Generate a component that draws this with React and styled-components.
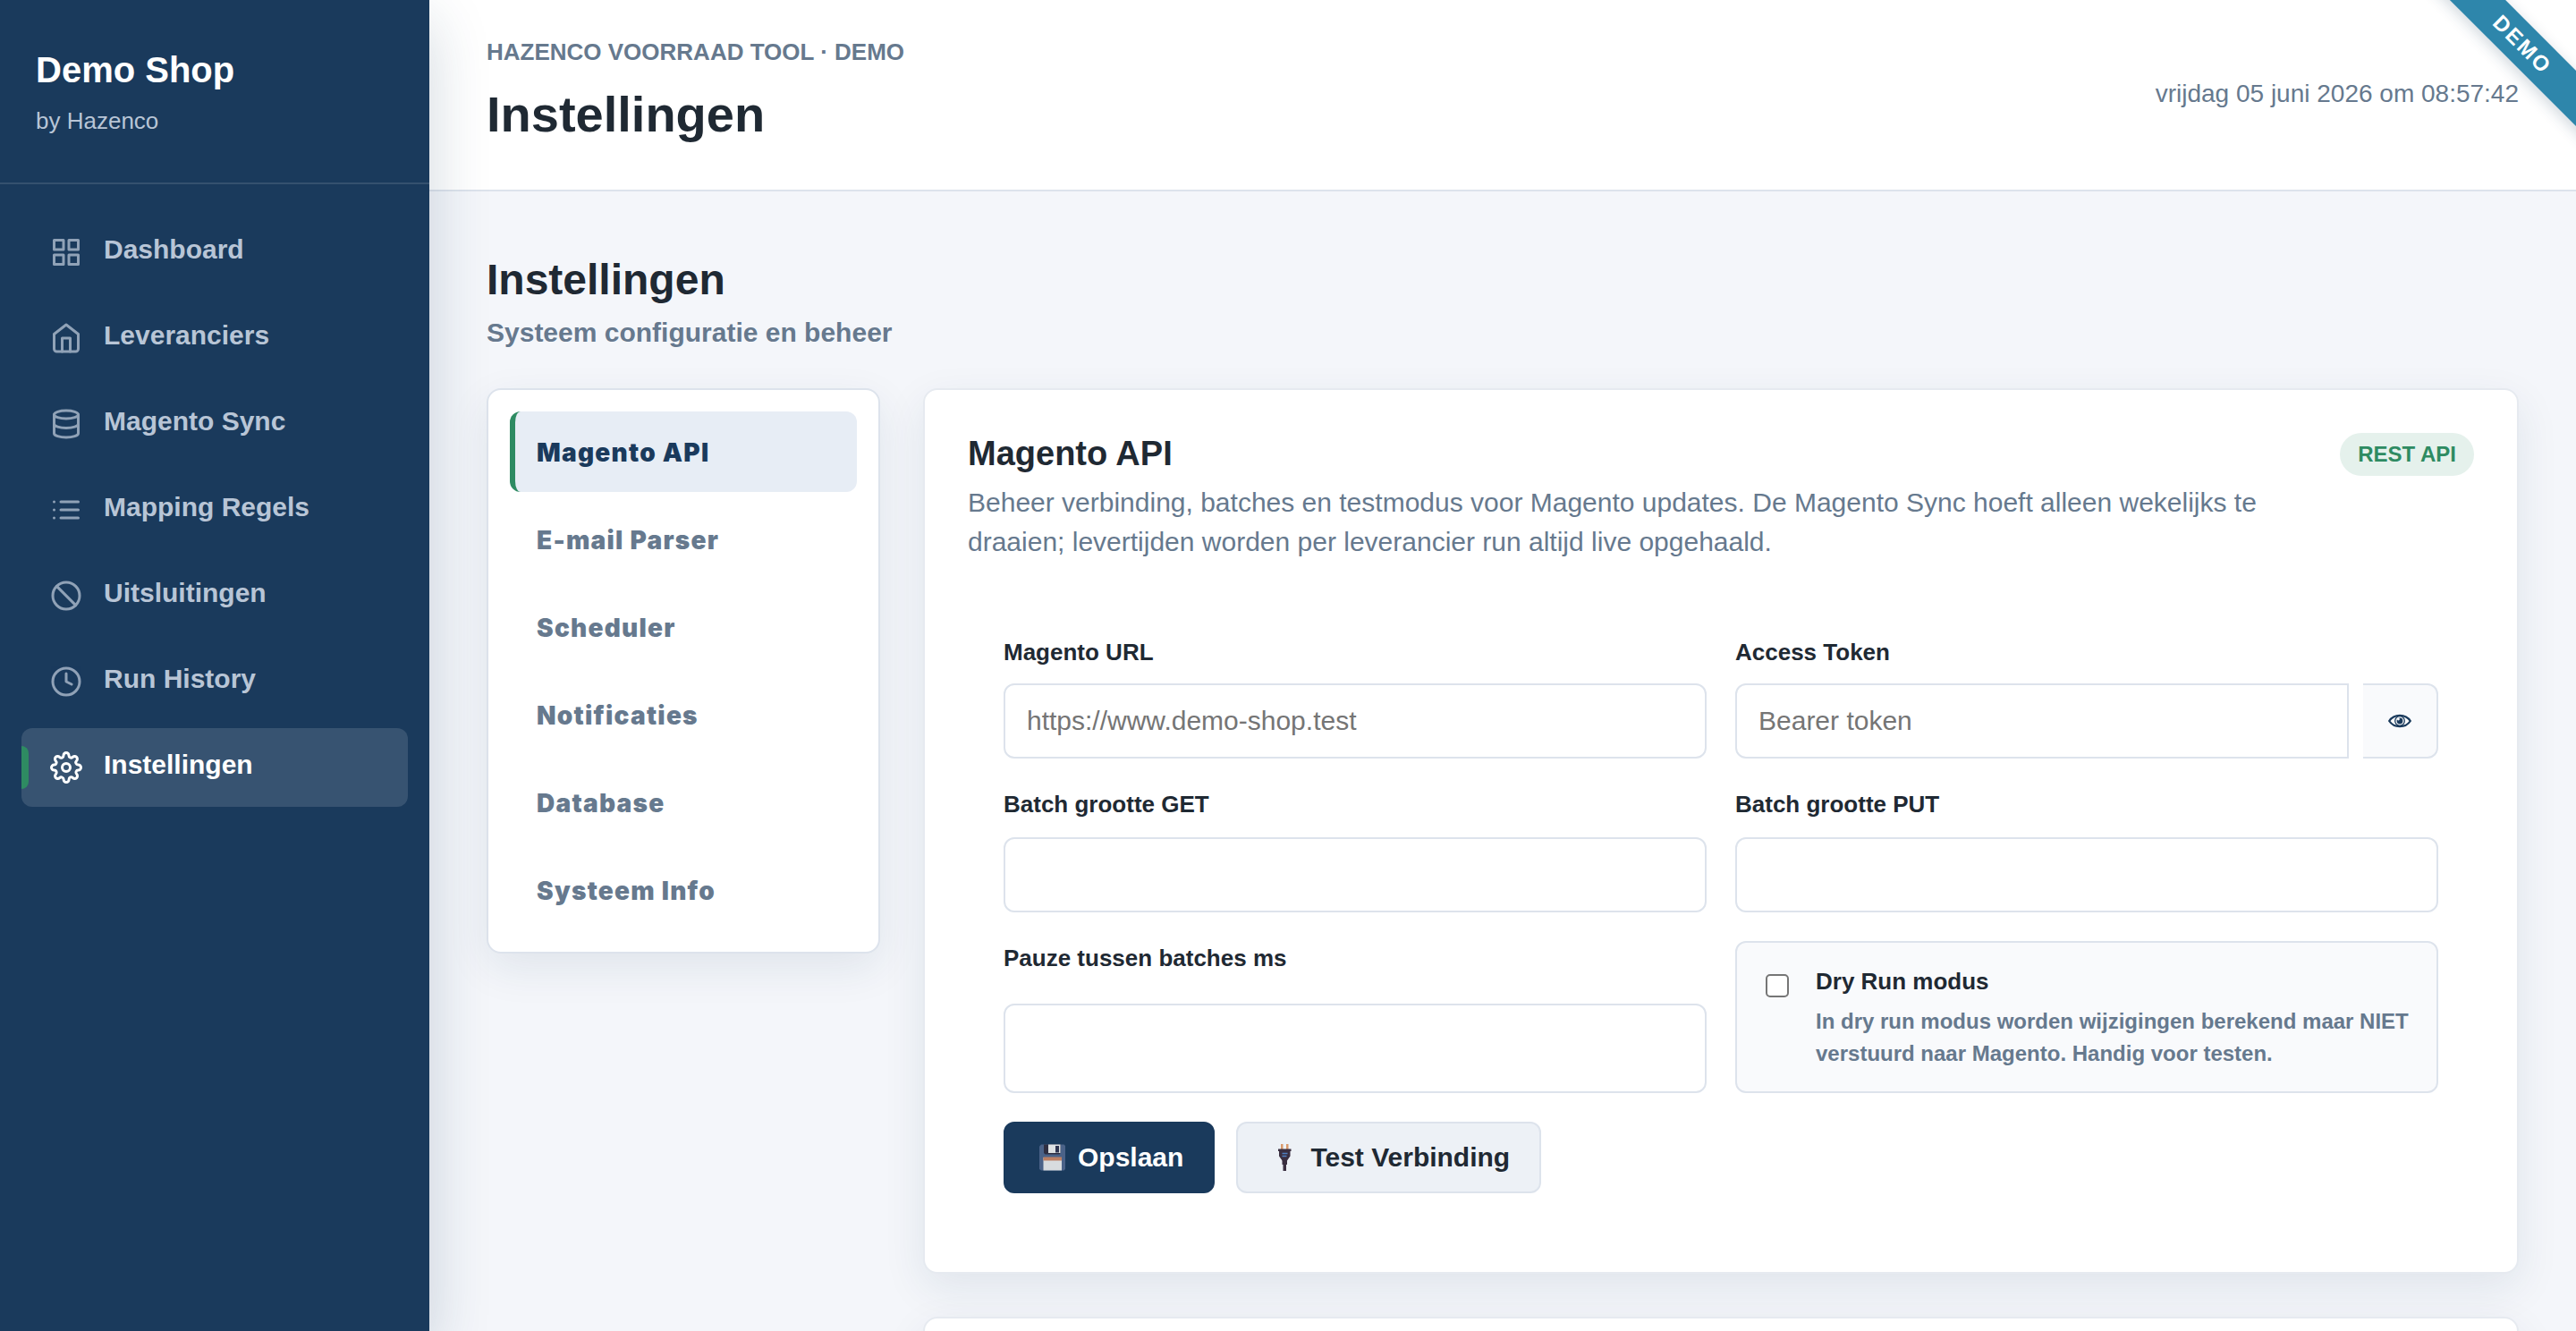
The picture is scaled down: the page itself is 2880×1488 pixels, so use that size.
import styled, { createGlobalStyle, css } from 'styled-components';
import {
    FiClock,
    FiDatabase,
    FiGrid,
    FiHome,
    FiList,
    FiSettings,
    FiSlash,
} from 'react-icons/fi';

const colors = {
    navy: '#1a3a5c',
    green: '#2e8b62',
    ribbon: '#2e86ab',
    page: '#f4f6fa',
    soft: '#f9fafc',
    border: '#dde3ec',
    text: '#1f2933',
    muted: '#66798e',
};

const mainMenu = [
    { label: 'Dashboard', icon: FiGrid },
    { label: 'Leveranciers', icon: FiHome },
    { label: 'Magento Sync', icon: FiDatabase },
    { label: 'Mapping Regels', icon: FiList },
    { label: 'Uitsluitingen', icon: FiSlash },
    { label: 'Run History', icon: FiClock },
    { label: 'Instellingen', icon: FiSettings, active: true },
];

const settingsTabs = [
    'Magento API',
    'E-mail Parser',
    'Scheduler',
    'Notificaties',
    'Database',
    'Systeem Info',
];

export default function App() {
    return (
        <>
            <GlobalStyle />
            <Layout>
                <Sidebar>
                    <Brand>
                        <h1>Demo Shop</h1>
                        <span>by Hazenco</span>
                    </Brand>
                    <Menu>
                        {mainMenu.map(({ label, icon: Icon, active }) => (
                            <MenuItem key={label} $active={active}>
                                <Icon />
                                <span>{label}</span>
                            </MenuItem>
                        ))}
                    </Menu>
                </Sidebar>
                <Main>
                    <TopBar>
                        <div>
                            <Eyebrow>Hazenco Voorraad Tool · Demo</Eyebrow>
                            <TopTitle>Instellingen</TopTitle>
                        </div>
                        <DateTime>vrijdag 05 juni 2026 om 08:57:42</DateTime>
                    </TopBar>
                    <Content>
                        <PageTitle>Instellingen</PageTitle>
                        <PageSubtitle>Systeem configuratie en beheer</PageSubtitle>
                        <SettingsGrid>
                            <TabsCard>
                                {settingsTabs.map((tab, i) => (
                                    <Tab key={tab} $active={i === 0}>
                                        {tab}
                                    </Tab>
                                ))}
                            </TabsCard>
                            <Sections>
                                <MagentoSection />
                                <Card />
                            </Sections>
                        </SettingsGrid>
                    </Content>
                </Main>
                <Ribbon>DEMO</Ribbon>
            </Layout>
        </>
    );
}

function MagentoSection() {
    return (
        <Card>
            <CardHeader>
                <div>
                    <CardTitle>Magento API</CardTitle>
                    <CardText>
                        Beheer verbinding, batches en testmodus voor Magento updates. De
                        Magento Sync hoeft alleen wekelijks te draaien; levertijden worden
                        per leverancier run altijd live opgehaald.
                    </CardText>
                </div>
                <Badge>REST API</Badge>
            </CardHeader>
            <Form>
                <FirstRow>
                    <Field>
                        <span>Magento URL</span>
                        <Input placeholder="https://www.demo-shop.test" />
                    </Field>
                    <Field>
                        <span>Access Token</span>
                        <TokenGroup>
                            <Input placeholder="Bearer token" />
                            <RevealButton type="button">
                                <EyeIcon />
                            </RevealButton>
                        </TokenGroup>
                    </Field>
                </FirstRow>
                <Row>
                    <Field>
                        <span>Batch grootte GET</span>
                        <Input />
                    </Field>
                    <Field>
                        <span>Batch grootte PUT</span>
                        <Input />
                    </Field>
                </Row>
                <Row>
                    <Field $stretch>
                        <span>Pauze tussen batches ms</span>
                        <Input />
                    </Field>
                    <CheckCard>
                        <input type="checkbox" />
                        <div>
                            <strong>Dry Run modus</strong>
                            <p>
                                In dry run modus worden wijzigingen berekend maar NIET
                                verstuurd naar Magento. Handig voor testen.
                            </p>
                        </div>
                    </CheckCard>
                </Row>
                <Actions>
                    <Button type="button" $primary>
                        <FloppyIcon />
                        Opslaan
                    </Button>
                    <Button type="button">
                        <PlugIcon />
                        Test Verbinding
                    </Button>
                </Actions>
            </Form>
        </Card>
    );
}

function EyeIcon() {
    return (
        <svg width="26" height="16" viewBox="0 0 26 16" fill="none">
            <path
                d="M1.2 8C4 3.600 8.200 1.800 13 1.800S22 3.600 24.800 8C22 12.400 17.800 14.200 13 14.200S4 12.400 1.200 8z"
                fill="#fff"
                stroke={colors.navy}
                strokeWidth="2.2"
            />
            <circle cx="13" cy="8" r="5.3" stroke={colors.navy} strokeWidth="1.3" />
            <circle cx="13" cy="8" r="3.4" fill={colors.navy} />
            <circle cx="11.4" cy="6" r="1.4" fill="#fff" />
        </svg>
    );
}

function FloppyIcon() {
    return (
        <svg width="47" height="30" viewBox="0 0 47 30">
            <path d="M6 .5h25.500L33 2v26l-1.500 1.500H6L4 28V2.500z" fill="#4a6288" />
            <path d="M9 .5h18.500V10l-1 1.500H10.500L9 10z" fill="#2f2f42" />
            <path d="M14 .5h13.500V10H14z" fill="#dde1e3" />
            <path d="M22 2h4v7.500h-4z" fill="#2f3550" />
            <path d="M8.500 15h20.500v14.500h-20.500z" fill="#d8dcdf" />
            <path d="M8.500 14.500h20.500v4h-20.500z" fill="#bd7f62" />
        </svg>
    );
}

function PlugIcon() {
    return (
        <svg width="47" height="30" viewBox="0 0 47 30">
            <path d="M14 0h2.500v7h-2.500zM20 0h2.500v7h-2.500z" fill="#d99a6c" />
            <path d="M11 5.500h14.500v2.500h-1v5.500l-3.500 5h-5.500l-3.500-5V8h-1z" fill="#3a2f40" />
            <path d="M15.500 18h5.500v5h-1v7h-3.500v-7h-1z" fill="#3a2f40" />
            <path
                d="M15.500 10.500h6M15.500 13.500h5"
                stroke="#4f7fc0"
                strokeWidth="1.5"
                fill="none"
            />
        </svg>
    );
}

const GlobalStyle = createGlobalStyle`
    * {
        box-sizing: border-box;
        margin: 0;
        padding: 0;
    }

    body {
        background: ${colors.page};
        color: ${colors.text};
        font-family: 'Liberation Sans', Arial, sans-serif;
        font-size: 30px;
    }
`;

const Layout = styled.div`
    position: relative;
    display: flex;
    height: 1488px;
    overflow: hidden;
`;

const Sidebar = styled.aside`
    position: relative;
    z-index: 2;
    flex: 0 0 480px;
    background: ${colors.navy};
    box-shadow: 0 24px 64px rgba(26, 58, 92, 0.2);
`;

const Brand = styled.div`
    height: 206px;
    padding: 48px 40px 0;
    border-bottom: 2px solid rgba(255, 255, 255, 0.12);
    color: #fff;

    h1 {
        font-size: 40px;
        line-height: 60px;
    }

    span {
        display: block;
        margin-top: 8px;
        font-size: 26px;
        line-height: 39px;
        color: #b8c5d6;
    }
`;

const Menu = styled.nav`
    display: flex;
    flex-direction: column;
    gap: 8px;
    padding: 32px 24px;
`;

const MenuItem = styled.a`
    position: relative;
    display: flex;
    align-items: center;
    gap: 24px;
    height: 88px;
    padding: 0 32px;
    border-radius: 12px;
    font-weight: 700;
    color: #b8c5d6;
    overflow: hidden;

    svg {
        width: 36px;
        height: 36px;
        opacity: 0.75;
    }

    span {
        padding-bottom: 6px;
    }

    ${({ $active }) =>
        $active &&
        css`
            background: rgba(255, 255, 255, 0.13);
            color: #fff;

            svg {
                opacity: 1;
            }

            &::before {
                content: '';
                position: absolute;
                left: 0;
                top: 20px;
                width: 8px;
                height: 48px;
                border-radius: 0 8px 8px 0;
                background: ${colors.green};
            }
        `}
`;

const Main = styled.main`
    flex: 1;
    min-width: 0;
`;

const TopBar = styled.header`
    display: flex;
    align-items: center;
    justify-content: space-between;
    height: 214px;
    padding: 0 64px 3px;
    background: #fff;
    border-bottom: 2px solid ${colors.border};
`;

const Eyebrow = styled.p`
    font-size: 26px;
    font-weight: 700;
    line-height: 39px;
    text-transform: uppercase;
    color: ${colors.muted};
`;

const TopTitle = styled.h2`
    margin-top: 8px;
    font-size: 56px;
    line-height: 84px;
`;

const DateTime = styled.span`
    font-size: 28px;
    color: ${colors.muted};
`;

const Content = styled.div`
    padding: 63px 64px 0;
`;

const PageTitle = styled.h2`
    font-size: 48px;
    line-height: 72px;
`;

const PageSubtitle = styled.p`
    font-weight: 700;
    line-height: 45px;
    color: ${colors.muted};
`;

const SettingsGrid = styled.div`
    display: grid;
    grid-template-columns: 440px 1fr;
    align-items: start;
    gap: 48px;
    margin-top: 40px;
`;

const panel = css`
    background: #fff;
    border-radius: 16px;
    box-shadow: 0 16px 48px rgba(26, 58, 92, 0.09);
`;

const TabsCard = styled.nav`
    ${panel}
    display: flex;
    flex-direction: column;
    gap: 8px;
    padding: 24px;
    border: 2px solid ${colors.border};
`;

const Tab = styled.a`
    height: 90px;
    padding-left: 24px;
    border-left: 6px solid ${({ $active }) => ($active ? colors.green : 'transparent')};
    border-radius: 12px;
    background: ${({ $active }) => ($active ? '#e7edf5' : 'transparent')};
    font-family: Inter, 'Liberation Sans', sans-serif;
    font-size: 28px;
    font-weight: 900;
    letter-spacing: 1.25px;
    line-height: 93px;
    color: ${({ $active }) => ($active ? colors.navy : colors.muted)};
`;

const Sections = styled.div`
    display: flex;
    flex-direction: column;
    gap: 48px;
`;

const Card = styled.section`
    ${panel}
    min-height: 200px;
    padding: 48px;
    border: 2px solid #e6eaf0;
`;

const CardHeader = styled.div`
    display: flex;
    align-items: flex-start;
    justify-content: space-between;
`;

const CardTitle = styled.h3`
    font-size: 38px;
    line-height: 46px;
`;

const CardText = styled.p`
    max-width: 1520px;
    margin-top: 10px;
    line-height: 44px;
    color: ${colors.muted};
`;

const Badge = styled.span`
    height: 48px;
    padding: 0 20px;
    border-radius: 24px;
    background: #e5f1ec;
    font-size: 24px;
    font-weight: 700;
    line-height: 48px;
    color: ${colors.green};
`;

const Form = styled.form`
    display: flex;
    flex-direction: column;
    gap: 32px;
    padding: 82px 40px 40px;
`;

const Row = styled.div`
    display: grid;
    grid-template-columns: 1fr 1fr;
    gap: 32px;
`;

const Field = styled.label`
    display: grid;
    grid-template-rows: ${({ $stretch }) => ($stretch ? '54px 100px' : '40px 84px')};
    gap: 16px;
    font-size: 26px;
    font-weight: 700;
    line-height: 39px;
`;

const FirstRow = styled(Row)`
    ${Field} {
        gap: 14px;
    }
`;

const Input = styled.input`
    width: 100%;
    min-width: 0;
    height: 100%;
    padding: 0 24px;
    border: 2px solid ${colors.border};
    border-radius: 12px;
    background: #fff;
    font: 400 30px 'Liberation Sans', Arial, sans-serif;

    &::placeholder {
        color: #757575;
    }
`;

const TokenGroup = styled.div`
    display: flex;
    gap: 16px;

    ${Input} {
        border-radius: 12px 0 0 12px;
    }
`;

const RevealButton = styled.button`
    display: flex;
    flex: 0 0 84px;
    align-items: center;
    justify-content: center;
    border: 2px solid ${colors.border};
    border-left: 0;
    border-radius: 0 12px 12px 0;
    background: ${colors.soft};
`;

const CheckCard = styled.label`
    display: flex;
    align-items: flex-start;
    gap: 30px;
    padding: 24px 0 24px 32px;
    border: 2px solid ${colors.border};
    border-radius: 12px;
    background: ${colors.soft};
    font-weight: 700;

    input {
        flex: 0 0 26px;
        height: 26px;
        margin-top: 11px;
        appearance: none;
        border: 2px solid #767676;
        border-radius: 5px;
        background: #fff;
    }

    strong {
        display: block;
        font-size: 26px;
        line-height: 39px;
    }

    p {
        max-width: 670px;
        margin-top: 7px;
        font-size: 24px;
        line-height: 36px;
        color: ${colors.muted};
    }
`;

const Actions = styled.div`
    display: flex;
    gap: 24px;
`;

const Button = styled.button`
    display: flex;
    align-items: center;
    height: 80px;
    padding: 0 33px 0 34px;
    border: 2px solid ${({ $primary }) => ($primary ? colors.navy : colors.border)};
    border-radius: 12px;
    background: ${({ $primary }) => ($primary ? colors.navy : '#edf1f6')};
    font: 700 30px 'Liberation Sans', Arial, sans-serif;
    color: ${({ $primary }) => ($primary ? '#fff' : colors.text)};
`;

const Ribbon = styled.div`
    position: absolute;
    z-index: 3;
    top: 28px;
    right: -80px;
    width: 280px;
    height: 44px;
    background: ${colors.ribbon};
    box-shadow: 0 4px 16px rgba(26, 58, 92, 0.2);
    transform: rotate(45deg);
    font-size: 24px;
    font-weight: 700;
    letter-spacing: 2.4px;
    line-height: 44px;
    text-align: center;
    color: #fff;
`;
